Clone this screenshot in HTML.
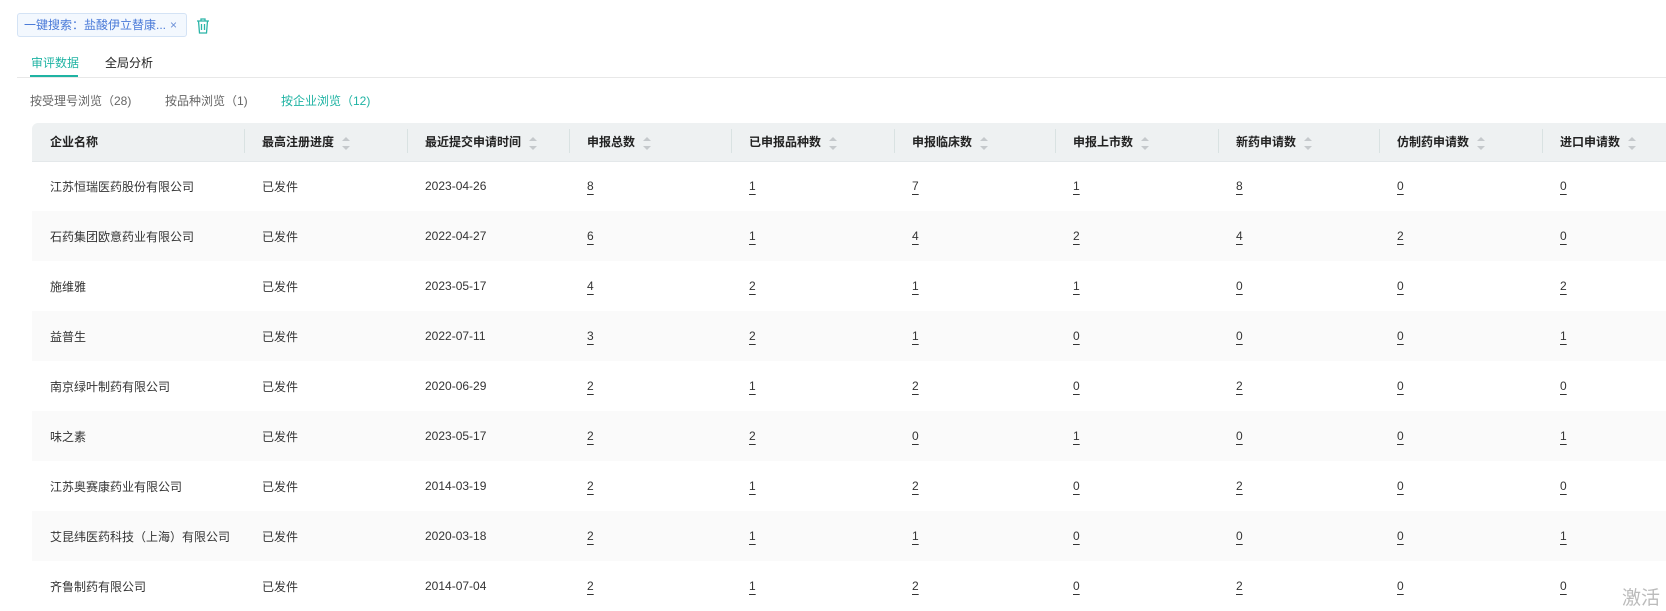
<!DOCTYPE html><html><head><meta charset="utf-8"><style>
*{margin:0;padding:0;box-sizing:border-box}
body{width:1666px;height:610px;overflow:hidden;background:#fff;font-family:"Liberation Sans","Noto Sans CJK SC",sans-serif;font-size:12px;color:#333;position:relative}
.tag{position:absolute;left:17px;top:13px;width:170px;height:24px;border:1px solid #d4e3f5;background:#f3f8fe;border-radius:3px;color:#4a7ad8;font-size:12px;line-height:22px;padding-left:6px}
.tag span{position:absolute;right:9px;top:0;color:#6b8fd6}
.trash{position:absolute;left:196px;top:18px}
.tabs{position:absolute;left:17px;top:77px;width:1649px;border-top:1px solid #e8e8e8}
.t{position:absolute;top:54px;font-size:12px}
.sub{position:absolute;top:92px;font-size:12px;color:#666}
table{position:absolute;left:32px;top:123px;border-collapse:collapse;width:1634px;table-layout:fixed}
th{height:38px;background:#eef1f2;text-align:left;font-weight:bold;color:#222;padding-left:18px;position:relative;border-bottom:1px solid #e4e8ea;font-size:12px}
th+th:before{content:"";position:absolute;left:0;top:6px;height:24px;border-left:1px solid #d9e2e2}
th:first-child{border-radius:6px 0 0 0}
td{height:50px;padding-left:18px;color:#333;white-space:nowrap}
tr:nth-child(odd) td{background:#fafafa}
tr:nth-child(2) td{background:#fff}
u{text-decoration:underline;text-underline-offset:4px}
.s{display:inline-block;vertical-align:middle;margin-left:8px;width:8px;height:13px;position:relative}
.s:before,.s:after{content:"";position:absolute;left:0;border-left:4px solid transparent;border-right:4px solid transparent}
.s:before{top:0;border-bottom:4px solid #c5c9cc}.s:after{bottom:0;border-top:4px solid #c5c9cc}
.wm{position:absolute;left:1622px;top:583px;font-size:19px;color:#bbb}
</style></head><body>
<div class="tag">一键搜索：盐酸伊立替康...<span>×</span></div>
<svg class="trash" width="14" height="16" viewBox="0 0 14 16" fill="none" stroke="#2bb5a8" stroke-width="1.3"><path d="M1 3h12M5 3V1h4v2M2.5 3l1 12h7l1-12M5.5 6v6M8.5 6v6"/></svg>
<div class="t" style="left:31px;color:#1fb3a3">审评数据</div>
<div style="position:absolute;left:30px;top:75px;width:48px;height:2px;background:#1fb3a3"></div>
<div class="t" style="left:105px;color:#222">全局分析</div>
<div class="tabs"></div>
<div class="sub" style="left:30px">按受理号浏览（28)</div>
<div class="sub" style="left:165px">按品种浏览（1)</div>
<div class="sub" style="left:281px;color:#1fb3a3">按企业浏览（12)</div>
<table>
<colgroup><col style="width:212px"><col style="width:163px"><col style="width:162px"><col style="width:162px"><col style="width:163px"><col style="width:161px"><col style="width:163px"><col style="width:161px"><col style="width:163px"><col></colgroup>
<tr><th>企业名称</th><th>最高注册进度<i class="s"></i></th><th>最近提交申请时间<i class="s"></i></th><th>申报总数<i class="s"></i></th><th>已申报品种数<i class="s"></i></th><th>申报临床数<i class="s"></i></th><th>申报上市数<i class="s"></i></th><th>新药申请数<i class="s"></i></th><th>仿制药申请数<i class="s"></i></th><th>进口申请数<i class="s"></i></th></tr>
<tr><td>江苏恒瑞医药股份有限公司</td><td>已发件</td><td>2023-04-26</td><td><u>8</u></td><td><u>1</u></td><td><u>7</u></td><td><u>1</u></td><td><u>8</u></td><td><u>0</u></td><td><u>0</u></td></tr>
<tr><td>石药集团欧意药业有限公司</td><td>已发件</td><td>2022-04-27</td><td><u>6</u></td><td><u>1</u></td><td><u>4</u></td><td><u>2</u></td><td><u>4</u></td><td><u>2</u></td><td><u>0</u></td></tr>
<tr><td>施维雅</td><td>已发件</td><td>2023-05-17</td><td><u>4</u></td><td><u>2</u></td><td><u>1</u></td><td><u>1</u></td><td><u>0</u></td><td><u>0</u></td><td><u>2</u></td></tr>
<tr><td>益普生</td><td>已发件</td><td>2022-07-11</td><td><u>3</u></td><td><u>2</u></td><td><u>1</u></td><td><u>0</u></td><td><u>0</u></td><td><u>0</u></td><td><u>1</u></td></tr>
<tr><td>南京绿叶制药有限公司</td><td>已发件</td><td>2020-06-29</td><td><u>2</u></td><td><u>1</u></td><td><u>2</u></td><td><u>0</u></td><td><u>2</u></td><td><u>0</u></td><td><u>0</u></td></tr>
<tr><td>味之素</td><td>已发件</td><td>2023-05-17</td><td><u>2</u></td><td><u>2</u></td><td><u>0</u></td><td><u>1</u></td><td><u>0</u></td><td><u>0</u></td><td><u>1</u></td></tr>
<tr><td>江苏奥赛康药业有限公司</td><td>已发件</td><td>2014-03-19</td><td><u>2</u></td><td><u>1</u></td><td><u>2</u></td><td><u>0</u></td><td><u>2</u></td><td><u>0</u></td><td><u>0</u></td></tr>
<tr><td>艾昆纬医药科技（上海）有限公司</td><td>已发件</td><td>2020-03-18</td><td><u>2</u></td><td><u>1</u></td><td><u>1</u></td><td><u>0</u></td><td><u>0</u></td><td><u>0</u></td><td><u>1</u></td></tr>
<tr><td>齐鲁制药有限公司</td><td>已发件</td><td>2014-07-04</td><td><u>2</u></td><td><u>1</u></td><td><u>2</u></td><td><u>0</u></td><td><u>2</u></td><td><u>0</u></td><td><u>0</u></td></tr>
</table>
<div class="wm">激活</div>
</body></html>
